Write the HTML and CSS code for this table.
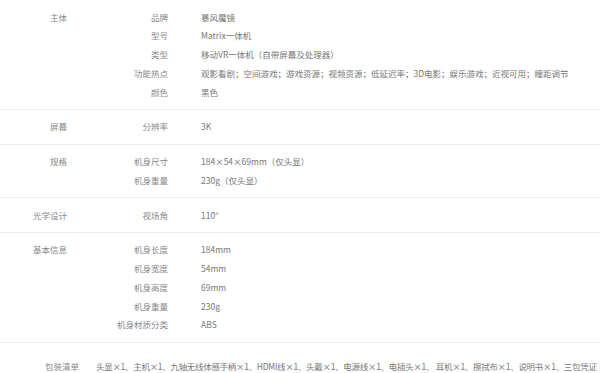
FILE: index.html
```html
<!DOCTYPE html>
<html lang="zh-CN">
<head>
<meta charset="utf-8">
<link rel="stylesheet" href="styles.css">
</head>
<body>
<div class="specs">
  <section class="group">
    <div class="group-name">主体</div>
    <dl class="rows">
      <div class="row"><dt>品牌</dt><dd>暴风魔镜</dd></div>
      <div class="row"><dt>型号</dt><dd>Matrix一体机</dd></div>
      <div class="row"><dt>类型</dt><dd>移动VR一体机（自带屏幕及处理器）</dd></div>
      <div class="row"><dt>功能热点</dt><dd>观影看剧；空间游戏；游戏资源；视频资源；低延迟率；3D电影；娱乐游戏；近视可用；瞳距调节</dd></div>
      <div class="row"><dt>颜色</dt><dd>黑色</dd></div>
    </dl>
  </section>
  <section class="group">
    <div class="group-name">屏幕</div>
    <dl class="rows">
      <div class="row"><dt>分辨率</dt><dd>3K</dd></div>
    </dl>
  </section>
  <section class="group">
    <div class="group-name">规格</div>
    <dl class="rows">
      <div class="row"><dt>机身尺寸</dt><dd>184×54×69mm（仅头显）</dd></div>
      <div class="row"><dt>机身重量</dt><dd>230g（仅头显）</dd></div>
    </dl>
  </section>
  <section class="group">
    <div class="group-name">光学设计</div>
    <dl class="rows">
      <div class="row"><dt>视场角</dt><dd>110°</dd></div>
    </dl>
  </section>
  <section class="group">
    <div class="group-name">基本信息</div>
    <dl class="rows">
      <div class="row"><dt>机身长度</dt><dd>184mm</dd></div>
      <div class="row"><dt>机身宽度</dt><dd>54mm</dd></div>
      <div class="row"><dt>机身高度</dt><dd>69mm</dd></div>
      <div class="row"><dt>机身重量</dt><dd>230g</dd></div>
      <div class="row"><dt>机身材质分类</dt><dd>ABS</dd></div>
    </dl>
  </section>
  <div class="package">
    <div class="package-label">包装清单</div>
    <div class="package-list">头显×1、主机×1、九轴无线体感手柄×1、HDMI线×1、头戴×1、电源线×1、电插头×1、 耳机×1、擦拭布×1、说明书×1、三包凭证</div>
  </div>
</div>
</body>
</html>
```

FILE: styles.css
```css
html, body {
  margin: 0;
  padding: 0;
  background: #fff;
}

body {
  font-family: "Noto Sans CJK SC", "Microsoft YaHei", sans-serif;
  font-size: 8.5px;
  color: #777;
  overflow: hidden;
}

.specs {
  width: 600px;
}

.group {
  display: grid;
  grid-template-columns: 67px 1fr;
  padding: 7.5px 0;
  border-bottom: 1px solid #ededed;
}

.group-name {
  text-align: right;
  line-height: 18.75px;
  color: #888;
}

.rows {
  margin: 0;
}

.row {
  display: grid;
  grid-template-columns: 101px 1fr;
  column-gap: 33px;
  line-height: 18.75px;
}

.row dt {
  text-align: right;
  color: #888;
}

.row dd {
  margin: 0;
  color: #777;
  white-space: nowrap;
}

.package {
  display: flex;
  gap: 17px;
  padding: 17px 0 0 45px;
  line-height: 12px;
  white-space: nowrap;
}

.package-label {
  color: #888;
}

.package-list {
  color: #777;
  letter-spacing: -0.3px;
}
```
